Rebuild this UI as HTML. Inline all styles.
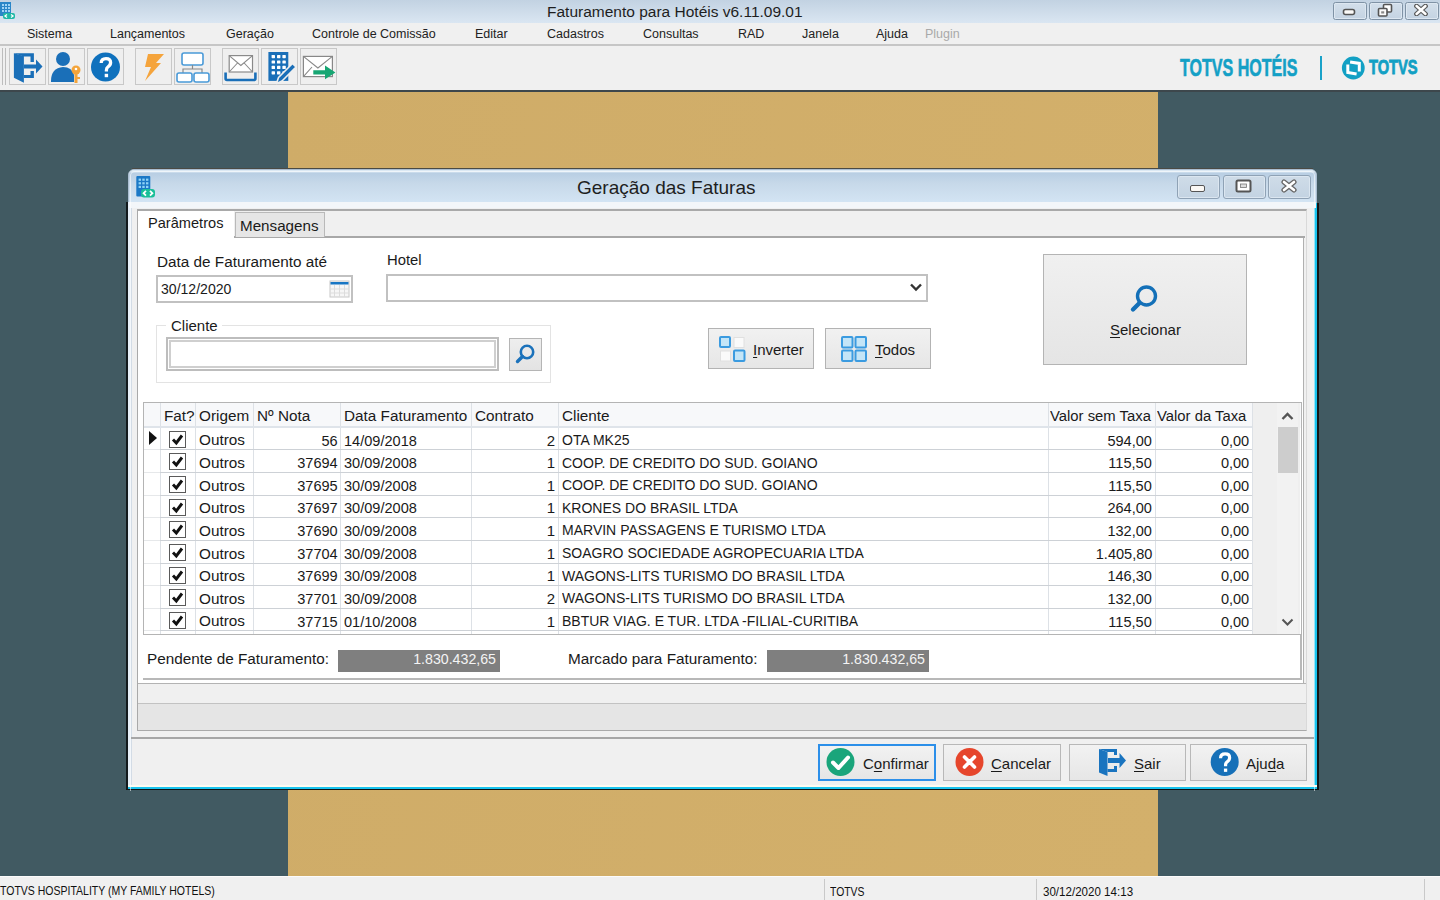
<!DOCTYPE html>
<html><head><meta charset="utf-8">
<style>
*{margin:0;padding:0;box-sizing:border-box}
html,body{width:1440px;height:900px;overflow:hidden;background:#415a62;font-family:"Liberation Sans",sans-serif;color:#1a1a1a}
.a{position:absolute}
.t{position:absolute;white-space:pre;line-height:1}
u{text-decoration:underline;text-underline-offset:2px}
</style></head><body>
<div class="a" style="left:0px;top:0px;width:1440px;height:23px;background:linear-gradient(#c2d2e2,#dae6f2)"></div>
<div class="t" style="left:547px;top:4.48px;font-size:15.5px;color:#1e1e1e;font-weight:normal;">Faturamento para Hotéis v6.11.09.01</div>
<div class="a" style="left:0px;top:23px;width:1440px;height:21px;background:#f0f0f0"></div>
<div class="a" style="left:0px;top:44px;width:1440px;height:2px;background:#c6c6c6"></div>
<div class="a" style="left:0px;top:46px;width:1440px;height:44px;background:#f0f0f0"></div>
<div class="a" style="left:0px;top:90px;width:1440px;height:2px;background:#3d474c"></div>
<div class="a" style="left:288px;top:92px;width:870px;height:784px;background:linear-gradient(100deg,#cfac68,#d3b06b)"></div>
<div class="a" style="left:0px;top:876px;width:1440px;height:24px;background:#f0f0f0;border-top:1px solid #fbfbfb"></div>
<svg class="a" style="left:0px;top:2px" width="16" height="18" viewBox="0 0 16 18"><rect x="0" y="0" width="11" height="14" fill="#2a86c8"/>
<g fill="#9fd3f5"><rect x="2" y="2" width="2" height="2"/><rect x="5" y="2" width="2" height="2"/><rect x="8" y="2" width="2" height="2"/>
<rect x="2" y="5" width="2" height="2"/><rect x="5" y="5" width="2" height="2"/><rect x="8" y="5" width="2" height="2"/>
<rect x="2" y="8" width="2" height="2"/><rect x="5" y="8" width="2" height="2"/><rect x="8" y="8" width="2" height="2"/></g>
<rect x="3" y="11" width="12" height="6" rx="2" fill="#1fb8a6"/>
<path d="M7 12.5 L5 14 L7 15.5 M11 12.5 L13 14 L11 15.5" stroke="#fff" stroke-width="1.3" fill="none"/></svg>
<div class="t" style="left:27px;top:28.42px;font-size:12.5px;color:#222;font-weight:normal;">Sistema</div>
<div class="t" style="left:110px;top:28.42px;font-size:12.5px;color:#222;font-weight:normal;">Lançamentos</div>
<div class="t" style="left:226px;top:28.42px;font-size:12.5px;color:#222;font-weight:normal;">Geração</div>
<div class="t" style="left:312px;top:28.42px;font-size:12.5px;color:#222;font-weight:normal;">Controle de Comissão</div>
<div class="t" style="left:475px;top:28.42px;font-size:12.5px;color:#222;font-weight:normal;">Editar</div>
<div class="t" style="left:547px;top:28.42px;font-size:12.5px;color:#222;font-weight:normal;">Cadastros</div>
<div class="t" style="left:643px;top:28.42px;font-size:12.5px;color:#222;font-weight:normal;">Consultas</div>
<div class="t" style="left:738px;top:28.42px;font-size:12.5px;color:#222;font-weight:normal;">RAD</div>
<div class="t" style="left:802px;top:28.42px;font-size:12.5px;color:#222;font-weight:normal;">Janela</div>
<div class="t" style="left:876px;top:28.42px;font-size:12.5px;color:#222;font-weight:normal;">Ajuda</div>
<div class="t" style="left:925px;top:28.42px;font-size:12.5px;color:#a9a9a9;font-weight:normal;">Plugin</div>
<div class="a" style="left:1333px;top:1.5px;width:34px;height:18px;border:1.2px solid #7f92a5;border-radius:2.5px;background:linear-gradient(#d3dfeb,#c4d3e2);box-shadow:inset 0 0 0 1px #dde7f1"></div>
<div class="a" style="left:1369px;top:1.5px;width:34px;height:18px;border:1.2px solid #7f92a5;border-radius:2.5px;background:linear-gradient(#d3dfeb,#c4d3e2);box-shadow:inset 0 0 0 1px #dde7f1"></div>
<div class="a" style="left:1405px;top:1.5px;width:34px;height:18px;border:1.2px solid #7f92a5;border-radius:2.5px;background:linear-gradient(#d3dfeb,#c4d3e2);box-shadow:inset 0 0 0 1px #dde7f1"></div>
<svg class="a" style="left:1342px;top:8px" width="14" height="8" viewBox="0 0 14 8"><rect x="1.5" y="1.5" width="11" height="5" rx="2" fill="#fbfaf8" stroke="#555" stroke-width="1.6"/></svg>
<svg class="a" style="left:1377px;top:3px" width="16" height="14" viewBox="0 0 16 14"><rect x="6.5" y="1.5" width="8" height="7.5" rx="1" fill="#fff" stroke="#555" stroke-width="1.6"/><rect x="1.5" y="5.5" width="8.5" height="7.5" rx="1" fill="#fafafa" stroke="#555" stroke-width="1.6"/><rect x="4.2" y="8.3" width="3" height="2.2" fill="#888"/></svg>
<svg class="a" style="left:1414px;top:4px" width="14" height="12" viewBox="0 0 14 12"><path d="M2.5 2 L11.5 10 M11.5 2 L2.5 10" stroke="#5a5a5a" stroke-width="4.8" stroke-linecap="round"/><path d="M2.5 2 L11.5 10 M11.5 2 L2.5 10" stroke="#fff" stroke-width="2.4" stroke-linecap="round"/></svg>
<div class="a" style="left:2px;top:48px;width:1px;height:37px;background:#bdbdbd"></div>
<div class="a" style="left:5px;top:48px;width:1px;height:37px;background:#bdbdbd"></div>
<div class="a" style="left:9px;top:48px;width:37px;height:37px;border:1px solid #c8c8c8;background:#efefef"></div>
<div class="a" style="left:48px;top:48px;width:37px;height:37px;border:1px solid #c8c8c8;background:#efefef"></div>
<div class="a" style="left:87px;top:48px;width:37px;height:37px;border:1px solid #c8c8c8;background:#efefef"></div>
<div class="a" style="left:135px;top:48px;width:37px;height:37px;border:1px solid #c8c8c8;background:#efefef"></div>
<div class="a" style="left:174px;top:48px;width:37px;height:37px;border:1px solid #c8c8c8;background:#efefef"></div>
<div class="a" style="left:222px;top:48px;width:37px;height:37px;border:1px solid #c8c8c8;background:#efefef"></div>
<div class="a" style="left:261px;top:48px;width:37px;height:37px;border:1px solid #c8c8c8;background:#efefef"></div>
<div class="a" style="left:300px;top:48px;width:37px;height:37px;border:1px solid #c8c8c8;background:#efefef"></div>
<svg class="a" style="left:9px;top:48px" width="37" height="37" viewBox="0 0 37 37"><path d="M4.9 5.3 L14.9 8 L14.9 34.8 L4.9 29.8 Z" fill="#1a6fb8"/>
<path d="M4.9 5.3 H24.9 V14 H21.5 V8.5 H14.9 Z M14.9 27 H21.5 V23 H24.9 V30 H14.9 Z" fill="#1a6fb8"/>
<path d="M15 16.5 H27 V11.5 L33.5 18.5 L27 25.5 V20.5 H15 Z" fill="#1a6fb8"/></svg>
<svg class="a" style="left:48px;top:48px" width="37" height="37" viewBox="0 0 37 37"><circle cx="15" cy="11" r="7" fill="#1a6fb8"/>
<path d="M3 33 Q3 20 15 19 Q24 19 26 27 L26 34 L3 34 Z" fill="#1a6fb8"/>
<circle cx="28" cy="22" r="4.5" fill="#f4a43a"/><rect x="26.5" y="24" width="3" height="11" fill="#f4a43a"/><rect x="29" y="29" width="3" height="2" fill="#f4a43a"/>
<circle cx="28" cy="21" r="1.3" fill="#fff"/></svg>
<svg class="a" style="left:87px;top:48px" width="37" height="37" viewBox="0 0 37 37"><circle cx="18.5" cy="19" r="14.5" fill="#0f71bd"/>
<path d="M14.2 15 Q14.2 10.6 19 10.6 Q23.6 10.6 23.6 14.6 Q23.6 17.2 21 18.8 Q19.4 19.8 19.4 22.2 V23.4" stroke="#fff" stroke-width="3.3" fill="none"/><rect x="17.7" y="25.8" width="3.4" height="3.4" fill="#fff"/></svg>
<svg class="a" style="left:135px;top:48px" width="37" height="37" viewBox="0 0 37 37"><path d="M13 6 L29 6 L21 15 L26 15 L10 33 L16 19 L10 19 Z" fill="#f5a43c"/></svg>
<svg class="a" style="left:174px;top:48px" width="37" height="37" viewBox="0 0 37 37"><rect x="8" y="5" width="21" height="12" rx="2" fill="#fff" stroke="#4a9ad8" stroke-width="1.6"/>
<path d="M18.5 17 V21 M9 25 V21 H28 V25" stroke="#8a8a8a" stroke-width="1.2" fill="none"/>
<rect x="3" y="25" width="15" height="9" rx="2" fill="#fff" stroke="#4a9ad8" stroke-width="1.6"/>
<rect x="20" y="25" width="15" height="9" rx="2" fill="#fff" stroke="#4a9ad8" stroke-width="1.6"/></svg>
<svg class="a" style="left:222px;top:48px" width="37" height="37" viewBox="0 0 37 37"><rect x="7.2" y="7.6" width="23.3" height="16.4" fill="#fff" stroke="#8a8a8a" stroke-width="1.2"/>
<path d="M7.2 7.6 L18.85 17.5 L30.5 7.6 M7.2 24 L15.5 15 M30.5 24 L22.2 15" stroke="#8a8a8a" stroke-width="1.1" fill="none"/>
<path d="M3.6 24.6 V30.6 Q3.6 32 5 32 H32 Q33.4 32 33.4 30.6 V24.6" stroke="#1a6fb8" stroke-width="2.6" fill="none"/></svg>
<svg class="a" style="left:261px;top:48px" width="37" height="37" viewBox="0 0 37 37"><rect x="7.4" y="4" width="19.9" height="28.9" fill="#1a6fb8"/>
<g fill="#fff"><rect x="10.6" y="7.0" width="3.4" height="3.2" rx="0.6"/><rect x="16.0" y="7.0" width="3.4" height="3.2" rx="0.6"/><rect x="21.4" y="7.0" width="3.4" height="3.2" rx="0.6"/><rect x="10.6" y="12.4" width="3.4" height="3.2" rx="0.6"/><rect x="16.0" y="12.4" width="3.4" height="3.2" rx="0.6"/><rect x="21.4" y="12.4" width="3.4" height="3.2" rx="0.6"/><rect x="10.6" y="17.8" width="3.4" height="3.2" rx="0.6"/><rect x="16.0" y="17.8" width="3.4" height="3.2" rx="0.6"/><rect x="21.4" y="17.8" width="3.4" height="3.2" rx="0.6"/><rect x="10.6" y="23.2" width="3.4" height="3.2" rx="0.6"/><rect x="16.0" y="23.2" width="3.4" height="3.2" rx="0.6"/><rect x="21.4" y="23.2" width="3.4" height="3.2" rx="0.6"/></g>
<path d="M15.5 35.5 L17.5 29.5 L31.5 15.5 L35 19 L21 33 Z" fill="#1a6fb8" stroke="#efefef" stroke-width="1.6" stroke-linejoin="round"/></svg>
<svg class="a" style="left:300px;top:48px" width="37" height="37" viewBox="0 0 37 37"><rect x="3.4" y="8.4" width="29" height="20.2" fill="#fff" stroke="#888" stroke-width="1.2"/>
<path d="M3.4 8.4 L17.9 20 L32.4 8.4 M3.4 28.6 L12 19" stroke="#888" stroke-width="1.1" fill="none"/>
<path d="M13.3 22.2 H25 V17.6 L35.4 24.4 L25 31.2 V26.6 H13.3 Z" fill="#17a673"/></svg>
<div class="t" style="left:1180px;top:55.76px;font-size:24.5px;color:#14a0c6;font-weight:bold;transform:scaleX(0.655);transform-origin:left top;-webkit-text-stroke:0.6px #14a0c6;">TOTVS HOTÉIS</div>
<div class="a" style="left:1320px;top:56px;width:2px;height:24px;background:#1aa2c9"></div>
<svg class="a" style="left:1341px;top:56px" width="25" height="25" viewBox="0 0 25 25"><circle cx="12.3" cy="12" r="11.4" fill="#12a0c4"/>
<path d="M9.1 6.1 L18.3 7.4 L18.3 15.4" stroke="#fff" stroke-width="3" fill="none" stroke-linejoin="miter"/>
<path d="M6.8 8.6 L6.8 16.5 L15.6 17.9" stroke="#fff" stroke-width="3" fill="none" stroke-linejoin="miter"/></svg>
<div class="t" style="left:1369px;top:58.16px;font-size:19.3px;color:#12a0c4;font-weight:bold;transform:scaleX(0.76);transform-origin:left top;-webkit-text-stroke:0.8px #12a0c4;">TOTVS</div>
<div class="t" style="left:0px;top:884.44px;font-size:13.3px;color:#111;font-weight:normal;transform:scaleX(0.79);transform-origin:left top;">TOTVS HOSPITALITY (MY FAMILY HOTELS)</div>
<div class="a" style="left:824px;top:879px;width:1px;height:21px;background:#c9c9c9"></div>
<div class="t" style="left:830px;top:885.00px;font-size:13px;color:#111;font-weight:normal;transform:scaleX(0.8);transform-origin:left top;">TOTVS</div>
<div class="a" style="left:1036px;top:879px;width:1px;height:21px;background:#c9c9c9"></div>
<div class="t" style="left:1043px;top:885.00px;font-size:13px;color:#111;font-weight:normal;transform:scaleX(0.89);transform-origin:left top;">30/12/2020 14:13</div>
<div class="a" style="left:1424px;top:879px;width:1px;height:21px;background:#c9c9c9"></div>
<div class="a" style="left:128px;top:169px;width:1189px;height:620px;background:#f0f0f0;border-radius:6px 6px 0 0;border:1px solid #aabdd0"></div>
<div class="a" style="left:128px;top:202px;width:4px;height:584px;background:#e6eff8;border-right:1px solid #d3dce6"></div>
<div class="a" style="left:126px;top:202px;width:2px;height:588px;background:#121a1d"></div>
<div class="a" style="left:1314px;top:203px;width:3px;height:586px;background:#19c3ee"></div>
<div class="a" style="left:1317px;top:203px;width:1.5px;height:587px;background:#151515"></div>
<div class="a" style="left:128px;top:785px;width:1189px;height:1.5px;background:#fbfbf2"></div>
<div class="a" style="left:128px;top:786.5px;width:1189px;height:2.2px;background:#19c3ee"></div>
<div class="a" style="left:126px;top:788.7px;width:1192px;height:1.5px;background:#121212"></div>
<div class="a" style="left:129px;top:170px;width:1187px;height:32px;border-radius:5px 5px 0 0;background:linear-gradient(#dbe8f3 0,#dbe8f3 2px,#b8cee3 3px,#c6d8e9 40%,#d3e4f3 100%)"></div>
<div class="a" style="left:132px;top:168px;width:1181px;height:1px;background:#4a4a44"></div>
<div class="a" style="left:129px;top:202px;width:1187px;height:6px;background:#f3f6f9"></div>
<div class="a" style="left:130px;top:171px;width:1185px;height:620px;border:1px solid rgba(255,255,255,0.55);border-radius:5px 5px 0 0;border-bottom:none"></div>
<svg class="a" style="left:136px;top:176px" width="20" height="22" viewBox="0 0 20 22"><rect x="0.3" y="0" width="14" height="20.5" rx="1" fill="#1b78c6"/>
<g fill="#8fd3f6"><rect x="2.6" y="2.6" width="2.4" height="2.2" /><rect x="6.3" y="2.6" width="2.4" height="2.2" /><rect x="10.0" y="2.6" width="2.4" height="2.2" /><rect x="2.6" y="6.2" width="2.4" height="2.2" /><rect x="6.3" y="6.2" width="2.4" height="2.2" /><rect x="10.0" y="6.2" width="2.4" height="2.2" /><rect x="2.6" y="9.8" width="2.4" height="2.2" /><rect x="6.3" y="9.8" width="2.4" height="2.2" /><rect x="10.0" y="9.8" width="2.4" height="2.2" /></g>
<rect x="5" y="13" width="14" height="8.5" rx="3" fill="#19bf98"/>
<path d="M10 14.8 L7.6 17.2 L10 19.6 M14 14.8 L16.4 17.2 L14 19.6" stroke="#fff" stroke-width="1.8" fill="none"/></svg>
<div class="t" style="left:577px;top:177.92px;font-size:19px;color:#1e1e1e;font-weight:normal;">Geração das Faturas</div>
<div class="a" style="left:1177px;top:175px;width:43px;height:24px;border:1.5px solid #8fa2b5;border-radius:3px;background:linear-gradient(#cfdce8,#c3d3e2);box-shadow:inset 0 0 0 1px #dbe6f0"></div>
<div class="a" style="left:1223px;top:175px;width:43px;height:24px;border:1.5px solid #8fa2b5;border-radius:3px;background:linear-gradient(#cfdce8,#c3d3e2);box-shadow:inset 0 0 0 1px #dbe6f0"></div>
<div class="a" style="left:1268px;top:175px;width:43px;height:24px;border:1.5px solid #8fa2b5;border-radius:3px;background:linear-gradient(#cfdce8,#c3d3e2);box-shadow:inset 0 0 0 1px #dbe6f0"></div>
<div class="a" style="left:1190px;top:185px;width:15px;height:7px;border:1.8px solid #555;border-radius:2px;background:#fbf8f4"></div>
<svg class="a" style="left:1235px;top:179px" width="17" height="14" viewBox="0 0 17 14"><rect x="1.5" y="1.5" width="14" height="11" rx="1.5" fill="#fff" stroke="#555" stroke-width="2"/><rect x="5.5" y="5" width="6" height="3.5" fill="#ddd" stroke="#777" stroke-width="0.8"/></svg>
<svg class="a" style="left:1280px;top:179px" width="18" height="14" viewBox="0 0 18 14"><path d="M4 3 L14 11 M14 3 L4 11" stroke="#666" stroke-width="5.2" stroke-linecap="round"/><path d="M4 3 L14 11 M14 3 L4 11" stroke="#fff" stroke-width="2.6" stroke-linecap="round"/></svg>
<div class="a" style="left:136.5px;top:209px;width:1170.5px;height:522px;border:1.5px solid #a9a9a9;border-top-width:2px;border-right-color:#d9d9d9;background:#f0f0f0"></div>
<div class="a" style="left:138px;top:237px;width:1165.5px;height:446px;background:#fff;border-right:1.5px solid #b0b0b0"></div>
<div class="a" style="left:138px;top:236px;width:1167px;height:1.8px;background:#a8a8a8"></div>
<div class="a" style="left:138px;top:682.5px;width:1168px;height:1.5px;background:#b3b3b3"></div>
<div class="a" style="left:138px;top:702.5px;width:1168px;height:1.5px;background:#c2c2c2"></div>
<div class="a" style="left:138px;top:704px;width:1168px;height:26px;background:#e5e5e5"></div>
<div class="a" style="left:131px;top:737px;width:1183px;height:2px;background:#a6a6a6"></div>
<div class="a" style="left:138px;top:211px;width:96px;height:28px;background:#fff"></div>
<div class="t" style="left:148px;top:215.64px;font-size:14.6px;color:#1a1a1a;font-weight:normal;">Parâmetros</div>
<div class="a" style="left:235px;top:212px;width:90px;height:25px;border:1px solid #b9b9b9;border-bottom:none;background:#e6e6e6"></div>
<div class="t" style="left:240px;top:218.13px;font-size:15.2px;color:#1a1a1a;font-weight:normal;">Mensagens</div>
<div class="t" style="left:157px;top:254.05px;font-size:15.3px;color:#1a1a1a;font-weight:normal;">Data de Faturamento até</div>
<div class="a" style="left:156px;top:275px;width:197px;height:28px;border:2px solid #c1c1c1;background:#fff"></div>
<div class="t" style="left:161px;top:282.23px;font-size:14.5px;color:#1a1a1a;font-weight:normal;transform:scaleX(0.97);transform-origin:left top;">30/12/2020</div>
<svg class="a" style="left:329px;top:279px" width="21" height="19" viewBox="0 0 21 19"><rect x="1" y="2" width="19" height="16" fill="#f6f6f6" stroke="#c8c8c8" stroke-width="1"/>
<rect x="1.5" y="3" width="18" height="2.5" fill="#1876c4"/>
<path d="M5.5 6 V18 M10.5 6 V18 M15.5 6 V18 M1 10 H20 M1 14 H20" stroke="#dcdcdc" stroke-width="1"/></svg>
<div class="t" style="left:387px;top:253.47px;font-size:14.8px;color:#1a1a1a;font-weight:normal;">Hotel</div>
<div class="a" style="left:386px;top:274px;width:542px;height:28px;border:2px solid #c1c1c1;background:#fff"></div>
<svg class="a" style="left:909px;top:282px" width="14" height="10" viewBox="0 0 14 10"><path d="M2 2.5 L7 7.5 L12 2.5" stroke="#333" stroke-width="2.4" fill="none"/></svg>
<div class="a" style="left:156px;top:325px;width:395px;height:58px;border:1px solid #e3e3e3;background:#fff"></div>
<div class="a" style="left:166px;top:318px;width:56px;height:12px;background:#fff"></div>
<div class="t" style="left:171px;top:318.30px;font-size:15px;color:#1a1a1a;font-weight:normal;">Cliente</div>
<div class="a" style="left:166px;top:337px;width:333px;height:34px;border:2px solid #bdbdbd;background:#fff"></div>
<div class="a" style="left:169px;top:340px;width:327px;height:28px;border:2px solid #cfcfcf;background:#fff"></div>
<div class="a" style="left:509px;top:338px;width:33px;height:33px;border:1px solid #b5b5b5;background:linear-gradient(#eeeeee,#e3e3e3)"></div>
<svg class="a" style="left:513px;top:342px" width="25" height="25" viewBox="0 0 25 25"><circle cx="14" cy="10" r="6.2" fill="none" stroke="#1b72bb" stroke-width="2.6"/><path d="M9.5 14.5 L4.5 19.5" stroke="#1b72bb" stroke-width="3.4" stroke-linecap="round"/></svg>
<div class="a" style="left:708px;top:328px;width:106px;height:41px;border:1.5px solid #b3b3b3;background:linear-gradient(#f1f1f1,#e6e6e6)"></div>
<svg class="a" style="left:718px;top:335px" width="28" height="28" viewBox="0 0 28 28"><rect x="2" y="2" width="10" height="10" rx="1" fill="#c4e5f7" stroke="#3b9be0" stroke-width="2"/>
<rect x="16" y="2.5" width="10" height="10" fill="#fafafa" stroke="#e0e0e0" stroke-width="1"/>
<rect x="2.5" y="16" width="10" height="10" fill="#fafafa" stroke="#e0e0e0" stroke-width="1"/>
<rect x="16" y="15.5" width="10.5" height="10.5" rx="1" fill="#c4e5f7" stroke="#3b9be0" stroke-width="2"/></svg>
<div class="t" style="left:753px;top:342.30px;font-size:15px;color:#1a1a1a;font-weight:normal;"><u>I</u>nverter</div>
<div class="a" style="left:825px;top:328px;width:106px;height:41px;border:1.5px solid #b3b3b3;background:linear-gradient(#f1f1f1,#e6e6e6)"></div>
<svg class="a" style="left:840px;top:335px" width="28" height="28" viewBox="0 0 28 28"><rect x="2" y="2" width="10.5" height="10.5" rx="1" fill="#c4e5f7" stroke="#3b9be0" stroke-width="2"/>
<rect x="15.5" y="2" width="10.5" height="10.5" rx="1" fill="#c4e5f7" stroke="#3b9be0" stroke-width="2"/>
<rect x="2" y="15.5" width="10.5" height="10.5" rx="1" fill="#c4e5f7" stroke="#3b9be0" stroke-width="2"/>
<rect x="15.5" y="15.5" width="10.5" height="10.5" rx="1" fill="#c4e5f7" stroke="#3b9be0" stroke-width="2"/></svg>
<div class="t" style="left:875px;top:342.30px;font-size:15px;color:#1a1a1a;font-weight:normal;"><u>T</u>odos</div>
<div class="a" style="left:1043px;top:254px;width:204px;height:111px;border:1.5px solid #b4b4b4;background:linear-gradient(#f0f0f0,#e5e5e5)"></div>
<svg class="a" style="left:1126px;top:281px" width="36" height="36" viewBox="0 0 36 36"><circle cx="20.5" cy="15" r="9" fill="none" stroke="#1470b8" stroke-width="3.4"/><path d="M13.5 22 L7 28.5" stroke="#1470b8" stroke-width="4.4" stroke-linecap="round"/></svg>
<div class="t" style="left:1110px;top:322.30px;font-size:15px;color:#1a1a1a;font-weight:normal;"><u>S</u>elecionar</div>
<div class="a" style="left:143px;top:402px;width:1159px;height:233px;border:1.5px solid #b4b4b4;background:#fff"></div>
<div class="a" style="left:144px;top:403px;width:1157px;height:25px;background:#f7f8fa"></div>
<div class="a" style="left:1252px;top:403px;width:48px;height:231px;background:#efefef"></div>
<div class="a" style="left:1277px;top:403px;width:21px;height:231px;background:#f2f2f2"></div>
<div class="a" style="left:1278px;top:427px;width:20px;height:46px;background:#cdcdcd"></div>
<svg class="a" style="left:1280px;top:410px" width="15" height="12" viewBox="0 0 15 12"><path d="M2.5 9 L7.5 4 L12.5 9" stroke="#555" stroke-width="2.4" fill="none"/></svg>
<svg class="a" style="left:1280px;top:616px" width="15" height="12" viewBox="0 0 15 12"><path d="M2.5 3.5 L7.5 8.5 L12.5 3.5" stroke="#555" stroke-width="2" fill="none"/></svg>
<div class="a" style="left:160px;top:403px;width:1px;height:231px;background:#dde1e6"></div>
<div class="a" style="left:195px;top:403px;width:1px;height:231px;background:#dde1e6"></div>
<div class="a" style="left:253px;top:403px;width:1px;height:231px;background:#dde1e6"></div>
<div class="a" style="left:340px;top:403px;width:1px;height:231px;background:#dde1e6"></div>
<div class="a" style="left:471px;top:403px;width:1px;height:231px;background:#dde1e6"></div>
<div class="a" style="left:558px;top:403px;width:1px;height:231px;background:#dde1e6"></div>
<div class="a" style="left:1048px;top:403px;width:1px;height:231px;background:#dde1e6"></div>
<div class="a" style="left:1155px;top:403px;width:1px;height:231px;background:#dde1e6"></div>
<div class="a" style="left:1252px;top:403px;width:1px;height:231px;background:#dde1e6"></div>
<div class="a" style="left:144px;top:426px;width:1108px;height:2px;background:#dfe4ea"></div>
<div class="a" style="left:160px;top:449px;width:1092px;height:1px;background:#cdd1d6"></div>
<div class="a" style="left:144px;top:449px;width:16px;height:1px;background:#e6e8ea"></div>
<div class="a" style="left:160px;top:472px;width:1092px;height:1px;background:#cdd1d6"></div>
<div class="a" style="left:144px;top:472px;width:16px;height:1px;background:#e6e8ea"></div>
<div class="a" style="left:160px;top:495px;width:1092px;height:1px;background:#cdd1d6"></div>
<div class="a" style="left:144px;top:495px;width:16px;height:1px;background:#e6e8ea"></div>
<div class="a" style="left:160px;top:517px;width:1092px;height:1px;background:#cdd1d6"></div>
<div class="a" style="left:144px;top:517px;width:16px;height:1px;background:#e6e8ea"></div>
<div class="a" style="left:160px;top:540px;width:1092px;height:1px;background:#cdd1d6"></div>
<div class="a" style="left:144px;top:540px;width:16px;height:1px;background:#e6e8ea"></div>
<div class="a" style="left:160px;top:563px;width:1092px;height:1px;background:#cdd1d6"></div>
<div class="a" style="left:144px;top:563px;width:16px;height:1px;background:#e6e8ea"></div>
<div class="a" style="left:160px;top:585px;width:1092px;height:1px;background:#cdd1d6"></div>
<div class="a" style="left:144px;top:585px;width:16px;height:1px;background:#e6e8ea"></div>
<div class="a" style="left:160px;top:608px;width:1092px;height:1px;background:#cdd1d6"></div>
<div class="a" style="left:144px;top:608px;width:16px;height:1px;background:#e6e8ea"></div>
<div class="a" style="left:160px;top:630px;width:1092px;height:1px;background:#cdd1d6"></div>
<div class="a" style="left:144px;top:630px;width:16px;height:1px;background:#e6e8ea"></div>
<div class="t" style="left:164px;top:408.05px;font-size:15.3px;color:#1a1a1a;font-weight:normal;">Fat?</div>
<div class="t" style="left:199px;top:408.05px;font-size:15.3px;color:#1a1a1a;font-weight:normal;">Origem</div>
<div class="t" style="left:257px;top:408.05px;font-size:15.3px;color:#1a1a1a;font-weight:normal;">Nº Nota</div>
<div class="t" style="left:344px;top:408.05px;font-size:15.3px;color:#1a1a1a;font-weight:normal;">Data Faturamento</div>
<div class="t" style="left:475px;top:408.05px;font-size:15.3px;color:#1a1a1a;font-weight:normal;">Contrato</div>
<div class="t" style="left:562px;top:408.05px;font-size:15.3px;color:#1a1a1a;font-weight:normal;">Cliente</div>
<div class="t" style="left:1050px;top:408.05px;font-size:15.3px;color:#1a1a1a;font-weight:normal;transform:scaleX(0.97);transform-origin:left top;">Valor sem Taxa</div>
<div class="t" style="left:1157px;top:408.05px;font-size:15.3px;color:#1a1a1a;font-weight:normal;transform:scaleX(0.97);transform-origin:left top;">Valor da Taxa</div>
<div class="a" style="left:169px;top:430.8px;width:17px;height:17px;border:1.6px solid #5a5a5a;background:#fff"></div>
<svg class="a" style="left:169px;top:430.8px" width="17" height="17" viewBox="0 0 17 17"><path d="M4 8.5 L7.3 12 L13 4.5" stroke="#111" stroke-width="2.9" fill="none"/></svg>
<div class="t" style="left:199px;top:432.35px;font-size:15.3px;color:#1a1a1a;font-weight:normal;">Outros</div>
<div class="t" style="right:1102px;top:432.60px;font-size:15px;color:#1a1a1a;font-weight:normal;transform:scaleX(0.97);transform-origin:right top;">56</div>
<div class="t" style="left:344px;top:432.60px;font-size:15px;color:#1a1a1a;font-weight:normal;transform:scaleX(0.97);transform-origin:left top;">14/09/2018</div>
<div class="t" style="right:885px;top:432.60px;font-size:15px;color:#1a1a1a;font-weight:normal;">2</div>
<div class="t" style="left:562px;top:432.94px;font-size:14.6px;color:#1a1a1a;font-weight:normal;transform:scaleX(0.96);transform-origin:left top;">OTA MK25</div>
<div class="t" style="right:288px;top:432.60px;font-size:15px;color:#1a1a1a;font-weight:normal;transform:scaleX(0.97);transform-origin:right top;">594,00</div>
<div class="t" style="right:191px;top:432.60px;font-size:15px;color:#1a1a1a;font-weight:normal;transform:scaleX(0.97);transform-origin:right top;">0,00</div>
<div class="a" style="left:169px;top:453.43px;width:17px;height:17px;border:1.6px solid #5a5a5a;background:#fff"></div>
<svg class="a" style="left:169px;top:453.43px" width="17" height="17" viewBox="0 0 17 17"><path d="M4 8.5 L7.3 12 L13 4.5" stroke="#111" stroke-width="2.9" fill="none"/></svg>
<div class="t" style="left:199px;top:454.98px;font-size:15.3px;color:#1a1a1a;font-weight:normal;">Outros</div>
<div class="t" style="right:1102px;top:455.23px;font-size:15px;color:#1a1a1a;font-weight:normal;transform:scaleX(0.97);transform-origin:right top;">37694</div>
<div class="t" style="left:344px;top:455.23px;font-size:15px;color:#1a1a1a;font-weight:normal;transform:scaleX(0.97);transform-origin:left top;">30/09/2008</div>
<div class="t" style="right:885px;top:455.23px;font-size:15px;color:#1a1a1a;font-weight:normal;">1</div>
<div class="t" style="left:562px;top:455.57px;font-size:14.6px;color:#1a1a1a;font-weight:normal;transform:scaleX(0.96);transform-origin:left top;">COOP. DE CREDITO DO SUD. GOIANO</div>
<div class="t" style="right:288px;top:455.23px;font-size:15px;color:#1a1a1a;font-weight:normal;transform:scaleX(0.97);transform-origin:right top;">115,50</div>
<div class="t" style="right:191px;top:455.23px;font-size:15px;color:#1a1a1a;font-weight:normal;transform:scaleX(0.97);transform-origin:right top;">0,00</div>
<div class="a" style="left:169px;top:476.06px;width:17px;height:17px;border:1.6px solid #5a5a5a;background:#fff"></div>
<svg class="a" style="left:169px;top:476.06px" width="17" height="17" viewBox="0 0 17 17"><path d="M4 8.5 L7.3 12 L13 4.5" stroke="#111" stroke-width="2.9" fill="none"/></svg>
<div class="t" style="left:199px;top:477.61px;font-size:15.3px;color:#1a1a1a;font-weight:normal;">Outros</div>
<div class="t" style="right:1102px;top:477.86px;font-size:15px;color:#1a1a1a;font-weight:normal;transform:scaleX(0.97);transform-origin:right top;">37695</div>
<div class="t" style="left:344px;top:477.86px;font-size:15px;color:#1a1a1a;font-weight:normal;transform:scaleX(0.97);transform-origin:left top;">30/09/2008</div>
<div class="t" style="right:885px;top:477.86px;font-size:15px;color:#1a1a1a;font-weight:normal;">1</div>
<div class="t" style="left:562px;top:478.20px;font-size:14.6px;color:#1a1a1a;font-weight:normal;transform:scaleX(0.96);transform-origin:left top;">COOP. DE CREDITO DO SUD. GOIANO</div>
<div class="t" style="right:288px;top:477.86px;font-size:15px;color:#1a1a1a;font-weight:normal;transform:scaleX(0.97);transform-origin:right top;">115,50</div>
<div class="t" style="right:191px;top:477.86px;font-size:15px;color:#1a1a1a;font-weight:normal;transform:scaleX(0.97);transform-origin:right top;">0,00</div>
<div class="a" style="left:169px;top:498.69px;width:17px;height:17px;border:1.6px solid #5a5a5a;background:#fff"></div>
<svg class="a" style="left:169px;top:498.69px" width="17" height="17" viewBox="0 0 17 17"><path d="M4 8.5 L7.3 12 L13 4.5" stroke="#111" stroke-width="2.9" fill="none"/></svg>
<div class="t" style="left:199px;top:500.24px;font-size:15.3px;color:#1a1a1a;font-weight:normal;">Outros</div>
<div class="t" style="right:1102px;top:500.49px;font-size:15px;color:#1a1a1a;font-weight:normal;transform:scaleX(0.97);transform-origin:right top;">37697</div>
<div class="t" style="left:344px;top:500.49px;font-size:15px;color:#1a1a1a;font-weight:normal;transform:scaleX(0.97);transform-origin:left top;">30/09/2008</div>
<div class="t" style="right:885px;top:500.49px;font-size:15px;color:#1a1a1a;font-weight:normal;">1</div>
<div class="t" style="left:562px;top:500.83px;font-size:14.6px;color:#1a1a1a;font-weight:normal;transform:scaleX(0.96);transform-origin:left top;">KRONES DO BRASIL LTDA</div>
<div class="t" style="right:288px;top:500.49px;font-size:15px;color:#1a1a1a;font-weight:normal;transform:scaleX(0.97);transform-origin:right top;">264,00</div>
<div class="t" style="right:191px;top:500.49px;font-size:15px;color:#1a1a1a;font-weight:normal;transform:scaleX(0.97);transform-origin:right top;">0,00</div>
<div class="a" style="left:169px;top:521.32px;width:17px;height:17px;border:1.6px solid #5a5a5a;background:#fff"></div>
<svg class="a" style="left:169px;top:521.32px" width="17" height="17" viewBox="0 0 17 17"><path d="M4 8.5 L7.3 12 L13 4.5" stroke="#111" stroke-width="2.9" fill="none"/></svg>
<div class="t" style="left:199px;top:522.87px;font-size:15.3px;color:#1a1a1a;font-weight:normal;">Outros</div>
<div class="t" style="right:1102px;top:523.12px;font-size:15px;color:#1a1a1a;font-weight:normal;transform:scaleX(0.97);transform-origin:right top;">37690</div>
<div class="t" style="left:344px;top:523.12px;font-size:15px;color:#1a1a1a;font-weight:normal;transform:scaleX(0.97);transform-origin:left top;">30/09/2008</div>
<div class="t" style="right:885px;top:523.12px;font-size:15px;color:#1a1a1a;font-weight:normal;">1</div>
<div class="t" style="left:562px;top:523.46px;font-size:14.6px;color:#1a1a1a;font-weight:normal;transform:scaleX(0.96);transform-origin:left top;">MARVIN PASSAGENS E TURISMO LTDA</div>
<div class="t" style="right:288px;top:523.12px;font-size:15px;color:#1a1a1a;font-weight:normal;transform:scaleX(0.97);transform-origin:right top;">132,00</div>
<div class="t" style="right:191px;top:523.12px;font-size:15px;color:#1a1a1a;font-weight:normal;transform:scaleX(0.97);transform-origin:right top;">0,00</div>
<div class="a" style="left:169px;top:543.95px;width:17px;height:17px;border:1.6px solid #5a5a5a;background:#fff"></div>
<svg class="a" style="left:169px;top:543.95px" width="17" height="17" viewBox="0 0 17 17"><path d="M4 8.5 L7.3 12 L13 4.5" stroke="#111" stroke-width="2.9" fill="none"/></svg>
<div class="t" style="left:199px;top:545.50px;font-size:15.3px;color:#1a1a1a;font-weight:normal;">Outros</div>
<div class="t" style="right:1102px;top:545.75px;font-size:15px;color:#1a1a1a;font-weight:normal;transform:scaleX(0.97);transform-origin:right top;">37704</div>
<div class="t" style="left:344px;top:545.75px;font-size:15px;color:#1a1a1a;font-weight:normal;transform:scaleX(0.97);transform-origin:left top;">30/09/2008</div>
<div class="t" style="right:885px;top:545.75px;font-size:15px;color:#1a1a1a;font-weight:normal;">1</div>
<div class="t" style="left:562px;top:546.09px;font-size:14.6px;color:#1a1a1a;font-weight:normal;transform:scaleX(0.96);transform-origin:left top;">SOAGRO SOCIEDADE AGROPECUARIA LTDA</div>
<div class="t" style="right:288px;top:545.75px;font-size:15px;color:#1a1a1a;font-weight:normal;transform:scaleX(0.97);transform-origin:right top;">1.405,80</div>
<div class="t" style="right:191px;top:545.75px;font-size:15px;color:#1a1a1a;font-weight:normal;transform:scaleX(0.97);transform-origin:right top;">0,00</div>
<div class="a" style="left:169px;top:566.58px;width:17px;height:17px;border:1.6px solid #5a5a5a;background:#fff"></div>
<svg class="a" style="left:169px;top:566.58px" width="17" height="17" viewBox="0 0 17 17"><path d="M4 8.5 L7.3 12 L13 4.5" stroke="#111" stroke-width="2.9" fill="none"/></svg>
<div class="t" style="left:199px;top:568.13px;font-size:15.3px;color:#1a1a1a;font-weight:normal;">Outros</div>
<div class="t" style="right:1102px;top:568.38px;font-size:15px;color:#1a1a1a;font-weight:normal;transform:scaleX(0.97);transform-origin:right top;">37699</div>
<div class="t" style="left:344px;top:568.38px;font-size:15px;color:#1a1a1a;font-weight:normal;transform:scaleX(0.97);transform-origin:left top;">30/09/2008</div>
<div class="t" style="right:885px;top:568.38px;font-size:15px;color:#1a1a1a;font-weight:normal;">1</div>
<div class="t" style="left:562px;top:568.72px;font-size:14.6px;color:#1a1a1a;font-weight:normal;transform:scaleX(0.96);transform-origin:left top;">WAGONS-LITS TURISMO DO BRASIL LTDA</div>
<div class="t" style="right:288px;top:568.38px;font-size:15px;color:#1a1a1a;font-weight:normal;transform:scaleX(0.97);transform-origin:right top;">146,30</div>
<div class="t" style="right:191px;top:568.38px;font-size:15px;color:#1a1a1a;font-weight:normal;transform:scaleX(0.97);transform-origin:right top;">0,00</div>
<div class="a" style="left:169px;top:589.21px;width:17px;height:17px;border:1.6px solid #5a5a5a;background:#fff"></div>
<svg class="a" style="left:169px;top:589.21px" width="17" height="17" viewBox="0 0 17 17"><path d="M4 8.5 L7.3 12 L13 4.5" stroke="#111" stroke-width="2.9" fill="none"/></svg>
<div class="t" style="left:199px;top:590.76px;font-size:15.3px;color:#1a1a1a;font-weight:normal;">Outros</div>
<div class="t" style="right:1102px;top:591.01px;font-size:15px;color:#1a1a1a;font-weight:normal;transform:scaleX(0.97);transform-origin:right top;">37701</div>
<div class="t" style="left:344px;top:591.01px;font-size:15px;color:#1a1a1a;font-weight:normal;transform:scaleX(0.97);transform-origin:left top;">30/09/2008</div>
<div class="t" style="right:885px;top:591.01px;font-size:15px;color:#1a1a1a;font-weight:normal;">2</div>
<div class="t" style="left:562px;top:591.35px;font-size:14.6px;color:#1a1a1a;font-weight:normal;transform:scaleX(0.96);transform-origin:left top;">WAGONS-LITS TURISMO DO BRASIL LTDA</div>
<div class="t" style="right:288px;top:591.01px;font-size:15px;color:#1a1a1a;font-weight:normal;transform:scaleX(0.97);transform-origin:right top;">132,00</div>
<div class="t" style="right:191px;top:591.01px;font-size:15px;color:#1a1a1a;font-weight:normal;transform:scaleX(0.97);transform-origin:right top;">0,00</div>
<div class="a" style="left:169px;top:611.84px;width:17px;height:17px;border:1.6px solid #5a5a5a;background:#fff"></div>
<svg class="a" style="left:169px;top:611.84px" width="17" height="17" viewBox="0 0 17 17"><path d="M4 8.5 L7.3 12 L13 4.5" stroke="#111" stroke-width="2.9" fill="none"/></svg>
<div class="t" style="left:199px;top:613.39px;font-size:15.3px;color:#1a1a1a;font-weight:normal;">Outros</div>
<div class="t" style="right:1102px;top:613.64px;font-size:15px;color:#1a1a1a;font-weight:normal;transform:scaleX(0.97);transform-origin:right top;">37715</div>
<div class="t" style="left:344px;top:613.64px;font-size:15px;color:#1a1a1a;font-weight:normal;transform:scaleX(0.97);transform-origin:left top;">01/10/2008</div>
<div class="t" style="right:885px;top:613.64px;font-size:15px;color:#1a1a1a;font-weight:normal;">1</div>
<div class="t" style="left:562px;top:613.98px;font-size:14.6px;color:#1a1a1a;font-weight:normal;transform:scaleX(0.96);transform-origin:left top;">BBTUR VIAG. E TUR. LTDA -FILIAL-CURITIBA</div>
<div class="t" style="right:288px;top:613.64px;font-size:15px;color:#1a1a1a;font-weight:normal;transform:scaleX(0.97);transform-origin:right top;">115,50</div>
<div class="t" style="right:191px;top:613.64px;font-size:15px;color:#1a1a1a;font-weight:normal;transform:scaleX(0.97);transform-origin:right top;">0,00</div>
<svg class="a" style="left:148px;top:430px" width="10" height="16" viewBox="0 0 10 16"><path d="M1 1 L9 8 L1 15 Z" fill="#111"/></svg>
<div class="a" style="left:143px;top:678px;width:1158px;height:1.5px;background:#b8b8b8"></div>
<div class="a" style="left:1300px;top:635px;width:1.5px;height:45px;background:#b8b8b8"></div>
<div class="t" style="left:147px;top:651.25px;font-size:15.3px;color:#1a1a1a;font-weight:normal;">Pendente de Faturamento:</div>
<div class="a" style="left:338px;top:650px;width:162px;height:22px;background:#7f7f7f"></div>
<div class="t" style="right:944px;top:651.98px;font-size:14.2px;color:#f4f4f4;font-weight:normal;">1.830.432,65</div>
<div class="t" style="left:568px;top:651.25px;font-size:15.3px;color:#1a1a1a;font-weight:normal;">Marcado para Faturamento:</div>
<div class="a" style="left:767px;top:650px;width:162px;height:22px;background:#7f7f7f"></div>
<div class="t" style="right:515px;top:651.98px;font-size:14.2px;color:#f4f4f4;font-weight:normal;">1.830.432,65</div>
<div class="a" style="left:818px;top:744px;width:118px;height:37px;border:2px solid #2c8fe9;background:linear-gradient(#f2f2f2,#e6e6e6)"></div>
<svg class="a" style="left:825px;top:747px" width="31" height="31" viewBox="0 0 31 31"><circle cx="15.5" cy="15" r="14" fill="#1aa57b"/><path d="M8 15.5 L13.5 21 L23 10.5" stroke="#fff" stroke-width="4" fill="none" stroke-linecap="round" stroke-linejoin="round"/></svg>
<div class="t" style="left:863px;top:756.30px;font-size:15px;color:#1a1a1a;font-weight:normal;">C<u>o</u>nfirmar</div>
<div class="a" style="left:943px;top:744px;width:118px;height:37px;border:1.5px solid #b8b8b8;background:linear-gradient(#f2f2f2,#e6e6e6)"></div>
<svg class="a" style="left:954px;top:747px" width="31" height="31" viewBox="0 0 31 31"><circle cx="15.5" cy="15" r="14" fill="#e6462c"/><path d="M10.5 10 L20.5 20 M20.5 10 L10.5 20" stroke="#fff" stroke-width="3.6" stroke-linecap="round"/></svg>
<div class="t" style="left:991px;top:756.30px;font-size:15px;color:#1a1a1a;font-weight:normal;"><u>C</u>ancelar</div>
<div class="a" style="left:1069px;top:744px;width:117px;height:37px;border:1.5px solid #b8b8b8;background:linear-gradient(#f2f2f2,#e6e6e6)"></div>
<svg class="a" style="left:1098px;top:747px" width="29" height="30" viewBox="0 0 29 30"><path d="M1 2 L9.5 5 L9.5 29 L1 25.5 Z" fill="#1a74bf"/>
<path d="M1 2 H19 V8 H16 V5 H9.5 Z M9.5 22 H16 V19 H19 V25 H9.5 Z" fill="#1a74bf"/>
<path d="M10 11 H21.5 V6 L28 13.5 L21.5 21 V16 H10 Z" fill="#1a74bf"/></svg>
<div class="t" style="left:1134px;top:756.30px;font-size:15px;color:#1a1a1a;font-weight:normal;"><u>S</u>air</div>
<div class="a" style="left:1190px;top:744px;width:117px;height:37px;border:1.5px solid #b8b8b8;background:linear-gradient(#f2f2f2,#e6e6e6)"></div>
<svg class="a" style="left:1210px;top:747px" width="30" height="31" viewBox="0 0 30 31"><circle cx="14.7" cy="15" r="14" fill="#1670b8"/>
<g transform="translate(14.7,15) scale(0.966) translate(-18.5,-19)"><path d="M14.2 15 Q14.2 10.6 19 10.6 Q23.6 10.6 23.6 14.6 Q23.6 17.2 21 18.8 Q19.4 19.8 19.4 22.2 V23.4" stroke="#fff" stroke-width="3.3" fill="none"/><rect x="17.7" y="25.8" width="3.4" height="3.4" fill="#fff"/></g></svg>
<div class="t" style="left:1246px;top:756.30px;font-size:15px;color:#1a1a1a;font-weight:normal;">Aju<u>d</u>a</div>
</body></html>
